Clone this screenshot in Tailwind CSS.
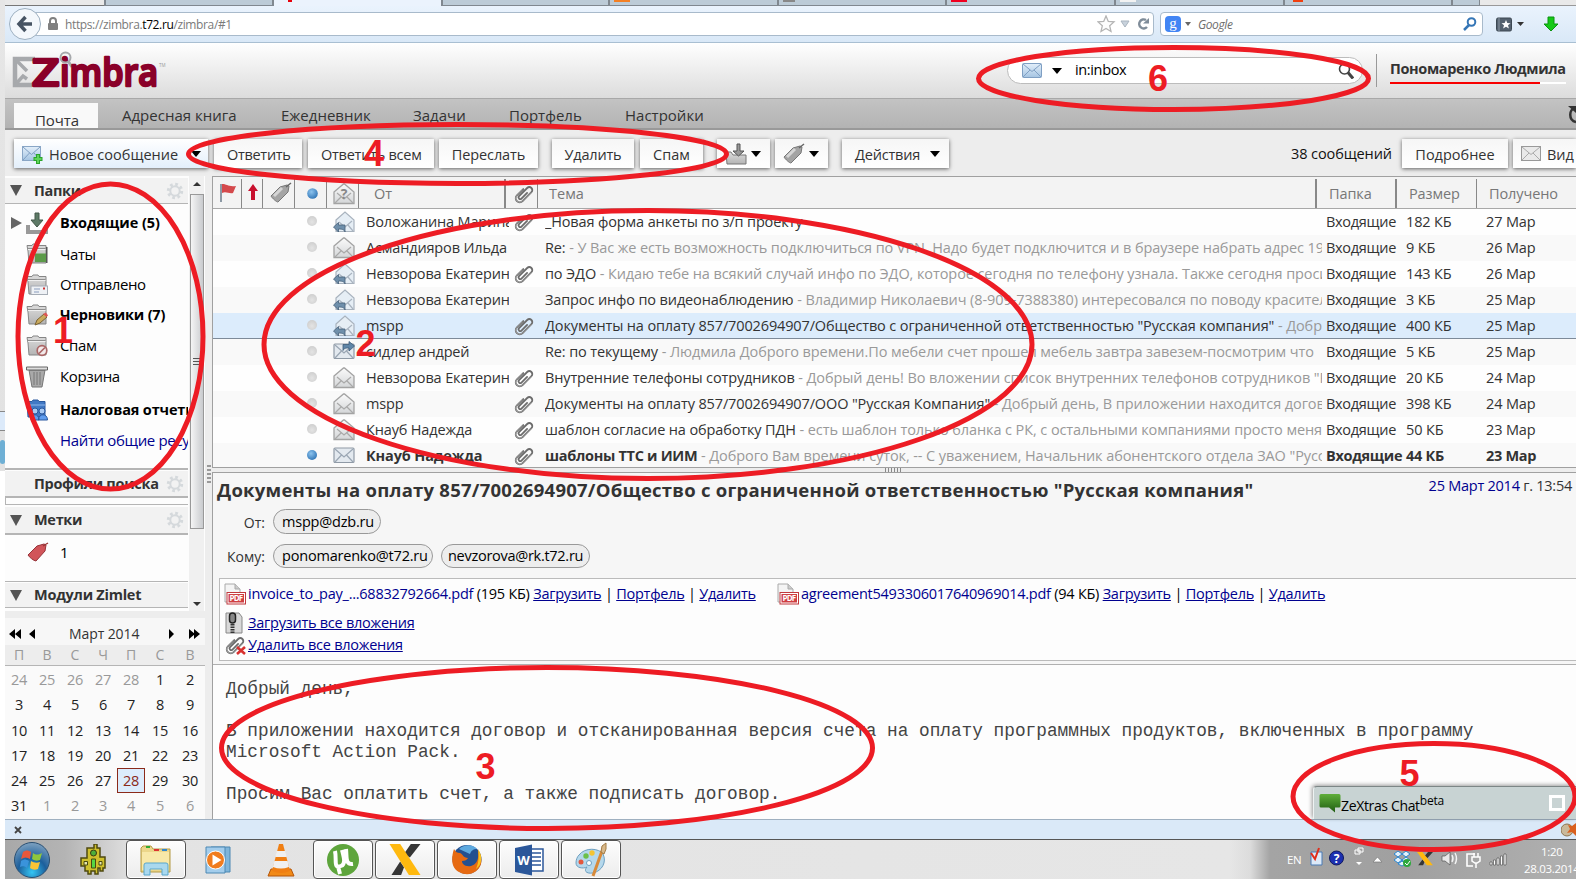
<!DOCTYPE html>
<html lang="ru">
<head>
<meta charset="utf-8">
<title>Zimbra: Входящие</title>
<script src="https://cdn.jsdelivr.net/npm/@tailwindcss/browser@4"></script>
</head>
<body class="relative h-[880px] w-[1576px] overflow-hidden bg-white font-['Open_Sans','Noto_Sans',sans-serif] text-[15px] text-[#333]">

<svg width="0" height="0" class="absolute">
  <defs>
    <linearGradient id="gEnv" x1="0" y1="0" x2="0" y2="1"><stop offset="0" stop-color="#fafafa"/><stop offset="1" stop-color="#d4d6d8"/></linearGradient>
    <linearGradient id="gBlue" x1="0" y1="0" x2="0" y2="1"><stop offset="0" stop-color="#e3effa"/><stop offset="1" stop-color="#a5c4e2"/></linearGradient>
    <linearGradient id="gFold" x1="0" y1="0" x2="0" y2="1"><stop offset="0" stop-color="#dcdcdc"/><stop offset="1" stop-color="#b4b4b4"/></linearGradient>
    <radialGradient id="gDot" cx=".4" cy=".35" r=".7"><stop offset="0" stop-color="#8cc3ee"/><stop offset="1" stop-color="#2f74b5"/></radialGradient>
    <radialGradient id="gOff" cx=".5" cy=".6" r=".6"><stop offset="0" stop-color="#e4e4e4"/><stop offset="1" stop-color="#cfcfcf"/></radialGradient>
    <linearGradient id="gChat" x1="0" y1="0" x2="0" y2="1"><stop offset="0" stop-color="#5fae3a"/><stop offset="1" stop-color="#1f5c12"/></linearGradient>
    <radialGradient id="gOrb" cx=".5" cy=".85" r=".9"><stop offset="0" stop-color="#35c6f4"/><stop offset=".45" stop-color="#1c5f9c"/><stop offset="1" stop-color="#8aa9c4"/></radialGradient>
    <symbol id="open" viewBox="0 0 22 22"><path d="M1 9 10.500 1h1L21 9v11.500H1z" fill="url(#gEnv)" stroke="#a3a3a3" stroke-width="1.300"/><path d="m4 10 7 6 7-6M2 20l6-6M20 20l-6-6" fill="none" stroke="#a9a9a9" stroke-width="1.200"/></symbol>
    <symbol id="closed" viewBox="0 0 22 22"><rect x="1" y="3" width="20" height="14.500" rx="1" fill="#e3e9ef" stroke="#8f9aa6" stroke-width="1.200"/><path d="m2 4 9 8 9-8M2 17l6.500-7M20 17l-6.500-7" fill="none" stroke="#9aa6b3" stroke-width="1.200"/></symbol>
    <symbol id="reply" viewBox="0 0 22 22"><path d="M3 9 12 1l9 8v11.500H3z" fill="#e6eef5" stroke="#a9b3be" stroke-width="1.200"/><path d="m6 11 6 5 7-6M20 20l-5-6" fill="none" stroke="#aab4c0" stroke-width="1.200"/><path d="M.5 16 5.500 11.500V14H12v7c-.5-2-2-3-6.500-3v3z" fill="#6f8fab" stroke="#46617a" stroke-width=".8"/></symbol>
    <symbol id="forward" viewBox="0 0 22 22"><use href="#closed"/><path d="M21.500 5 16 .5v3h-6v6c1-2 2-2.500 6-2.500v3z" fill="#5f86a8" stroke="#3d5c78" stroke-width=".8"/></symbol>
    <symbol id="clip" viewBox="0 0 22 22"><g transform="rotate(45 11 11)" fill="none" stroke-linecap="round"><path d="M7 8v9a4 4 0 0 0 8 0V4.500a3 3 0 0 0-6 0V16a1.700 1.700 0 0 0 3.400 0V8" stroke="#6c6c6c" stroke-width="1.800"/><path d="M7 9v8a4 4 0 0 0 8 0V5" stroke="#b5b5b5" stroke-width=".6"/></g></symbol>
    <symbol id="tag" viewBox="0 0 22 22"><path d="m1 14 9-9 7-2 2 1-1 6-10 10c-1 .5-6-4-7-6z" fill="#a4a4a4" stroke="#777"/><path d="m4 14 8-8" stroke="#d5d5d5" stroke-width="3"/><path d="m16 5 5-4" stroke="#666" stroke-width="1.400"/></symbol>
    <symbol id="gear" viewBox="0 0 18 18"><circle cx="9" cy="9" r="6.700" fill="none" stroke="#d5d9dc" stroke-width="3" stroke-dasharray="2.700 2.560"/><circle cx="9" cy="9" r="4.700" fill="none" stroke="#d5d9dc" stroke-width="2"/></symbol>
    <symbol id="folder" viewBox="0 0 22 22"><path d="M1 2.500h5L7 1h5l1 1.500h7V20H3L2 8z" fill="url(#gFold)" stroke="#858585"/><path d="M1.500 5.500h18" stroke="#8f8f8f"/><path d="M2 6.500h17.500" stroke="#efefef"/></symbol>
    <symbol id="xlogo" viewBox="0 0 32 32"><path d="M22 0h10L21 14l-6-4zM2 32h10l3-8-4-6z" fill="#363636"/><path d="M0 0h11l21 32H20z" fill="#ffb90f"/></symbol>
    <symbol id="pdf" viewBox="0 0 22 22"><path d="M1 1h10l5 5v13H1z" fill="#f4f4f4" stroke="#aaa"/><path d="M11 1v5h5" fill="#ccc" stroke="#aaa"/><rect x="3" y="9.500" width="18.500" height="11.500" fill="#fff" stroke="#c0383c"/><rect x="4.500" y="11" width="15.500" height="8.500" fill="#cf3f43"/><text x="12.200" y="18.200" font-size="8" font-weight="700" fill="#fff" text-anchor="middle" textLength="13.500">PDF</text></symbol>
  </defs>
</svg>

<div class="flex h-[880px] w-[1576px]">
  <!-- desktop strip left of the window -->
  <div class="flex h-full w-[5px] shrink-0 flex-col bg-gradient-to-b from-[#e6e6e6] to-[#dedede]">
    <div class="h-[411px]"></div>
    <div class="h-5 border-y border-[#888] bg-[#dceafa]"></div>
    <div class="h-[9px]"></div>
    <div class="h-6 rounded bg-[#6fb0d5]"></div>
    <div class="h-[7px]"></div>
    <div class="grow bg-white"></div>
  </div>

  <div class="flex w-[1571px] flex-col">
    <!-- browser tab strip -->
    <div class="flex h-1.5 overflow-hidden bg-[#e9e9e9]">
      <div class="w-[99px] border-b border-[#777]"></div>
      <div class="w-[170px] border-x-2 border-b border-[#808890] bg-[#bccbd7]"></div>
      <div class="w-[167px] bg-[#ebf3fd] pl-[14px]"><div class="h-0.5 w-1 bg-red-600"></div></div>
      <div class="w-[169px] border-x-2 border-b border-[#808890] bg-[#bccbd7]"></div>
      <div class="w-[169px] border-r-2 border-b border-[#808890] bg-[#bccbd7] pl-1"><div class="h-0.5 w-4 bg-[#f48024]"></div></div>
      <div class="w-[168px] border-r-2 border-b border-[#808890] bg-[#bccbd7] pl-1"><div class="h-0.5 w-3 bg-[#888]"></div></div>
      <div class="w-[169px] border-r-2 border-b border-[#808890] bg-[#bccbd7] pl-1"><div class="h-0.5 w-4 bg-[#f00020]"></div></div>
      <div class="w-[169px] border-r-2 border-b border-[#808890] bg-[#bccbd7] pl-1"><div class="h-0.5 w-4 bg-[#f2f2f2]"></div></div>
      <div class="w-[168px] border-r-2 border-b border-[#808890] bg-[#bccbd7] pl-2"><div class="h-0.5 w-2.5 bg-[#f04010]"></div></div>
      <div class="w-[27px] border-r border-b border-[#808890] bg-[#bccbd7]"></div>
      <div class="grow border-b border-[#999]"></div>
    </div>

    <!-- address bar -->
    <div class="flex h-[37px] items-center border-b border-[#a9bfd2] bg-gradient-to-b from-[#eaf3fd] to-[#d9e8f7]">
      <div class="z-10 ml-1 flex size-8 items-center justify-center rounded-full border border-[#9db0c1] bg-[#f4f8fc]">
        <svg width="18" height="18" viewBox="0 0 18 18" fill="none" stroke="#475463" stroke-width="3.500"><path d="M9.500 2 3 9l6.500 7M3 9h13"/></svg>
      </div>
      <div class="-ml-1.5 flex h-6 w-[1119px] items-center rounded-r-sm border border-[#a8bacb] bg-white pl-[11px] text-[13px]">
        <svg width="12" height="14" viewBox="0 0 12 14"><path d="M3 7V4c0-4 6-4 6 0v3" fill="none" stroke="#808080" stroke-width="2"/><rect x="1" y="6" width="10" height="7" rx="1" fill="#808080"/></svg>
        <div class="ml-1.5 w-[1010px] pt-0.5 text-[12px] tracking-[-.37px] whitespace-nowrap text-[#7a7a7a]">https://zimbra.<span class="text-black">t72.ru</span>/zimbra/#1</div>
        <svg class="ml-[22px]" width="54" height="18" viewBox="0 0 54 18"><path d="m9 1 2.300 5.500 5.700.4-4.300 3.900 1.300 5.700-5-3-5 3 1.300-5.700L1 6.900l5.700-.4z" fill="#fdfdfd" stroke="#b4b4b4" stroke-width="1.300"/><path d="M24 6h8l-4 6z" fill="#c8d2dc" stroke="#a9b4bf"/><path d="M49 5a4.500 4.500 0 1 0 1 7" fill="none" stroke="#7f8c99" stroke-width="2.500"/><path d="M46 8.500h6V3z" fill="#7f8c99"/></svg>
      </div>
      <div class="ml-1.5 flex h-6 w-[323px] items-center rounded-sm border border-[#a8bacb] bg-white pl-1">
        <div class="flex size-4 items-center justify-center rounded-sm bg-[#4285f4] pb-0.5 font-['Liberation_Serif',serif] text-[15px] text-white">g</div>
        <div class="ml-1 h-0 w-0 border-x-[3px] border-t-[4px] border-x-transparent border-t-[#666]"></div>
        <div class="ml-[7px] w-[265px] pt-0.5 text-[12px] tracking-[-.4px] text-[#6e6e6e] italic">Google</div>
        <svg width="14" height="14" viewBox="0 0 14 14" fill="none" stroke="#3576b6"><circle cx="8.500" cy="5" r="3.800" stroke-width="2"/><path d="m6 8-5 5" stroke-width="2.500"/></svg>
      </div>
      <svg class="ml-[13px]" width="64" height="20" viewBox="0 0 64 20"><rect x=".5" y="4" width="15" height="13" rx="1.500" fill="#54616f" stroke="#3d4853"/><path d="M3 4v13" stroke="#8c98a4"/><path d="m10 6 1.300 3 3.200.3-2.500 2 .9 3.200-2.900-1.700-2.900 1.700.9-3.200-2.500-2L8.700 9z" fill="#fff"/><path d="M21 8h7l-3.500 4z" fill="#333"/><path d="M52 3h6v7h4l-7 7-7-7h4z" fill="#17c917" stroke="#0b9410"/></svg>
    </div>

    <!-- Zimbra masthead -->
    <div class="flex h-[55px] items-center bg-gradient-to-b from-white to-[#dcdcdc]">
      <svg class="ml-[7px]" width="154" height="45" viewBox="0 0 154 45" font-family="Open Sans">
        <path d="M23 11H3v26h17" fill="none" stroke="#a7a9ac" stroke-width="4.500"/><path d="m3 11 12 12M3 37l8-9 4 3" fill="none" stroke="#a7a9ac" stroke-width="3.500"/><path d="m56 13 4 6" stroke="#a7a9ac" stroke-width="3"/>
        <g font-weight="600" font-size="38" fill="#8a0029" stroke="#8a0029" stroke-width="2.400" stroke-linejoin="round"><text x="20" y="38" textLength="27.500" lengthAdjust="spacingAndGlyphs">Z</text><text x="48" y="38" textLength="98" lengthAdjust="spacingAndGlyphs">imbra</text></g>
        <circle cx="53.500" cy="9.500" r="5" fill="none" stroke="#a7a9ac" stroke-width="2"/>
        <text x="147" y="19" font-size="4.500" fill="#999">TM</text>
      </svg>
      <div class="ml-[841px] flex h-[27px] w-[356px] items-center rounded-full border border-[#bcbcbc] bg-white pl-[14px]">
        <svg width="20" height="15" viewBox="0 0 20 15"><rect x=".5" y=".5" width="19" height="14" rx="1" fill="url(#gBlue)" stroke="#7f9fc3"/><path d="m1 1 9 7.500L19 1M1 14l7-7M19 14l-7-7" fill="none" stroke="#7f9fc3"/></svg>
        <div class="ml-[10px] h-0 w-0 border-x-[5px] border-t-[6px] border-x-transparent border-t-black"></div>
        <div class="ml-[13px] w-[263px] pb-px text-[14.500px] tracking-[-.35px] text-black">in:inbox</div>
        <svg width="16" height="16" viewBox="0 0 16 16" fill="none" stroke="#444"><circle cx="6.500" cy="6" r="5" stroke-width="1.600"/><path d="m10 9.500 5 6" stroke-width="3"/></svg>
      </div>
      <div class="ml-[13px] h-[33px] w-px bg-[#999]"></div>
      <div class="ml-[13px] w-[176px]">
        <div class="h-6 text-[14.500px] leading-6 font-bold tracking-[-.35px] whitespace-nowrap text-[#333]">Пономаренко Людмила</div>
        <div class="mt-px h-0.5 w-full bg-white"><div class="h-0.5 w-[150px] bg-[#f80000]"></div></div>
      </div>
    </div>

    <!-- application tabs -->
    <div class="flex h-8 overflow-hidden border-t border-b-2 border-t-[#a8a8a8] border-b-[#999] bg-gradient-to-b from-[#c3c3c3] to-[#b3b3b3] text-[15px] whitespace-nowrap text-[#333]">
      <div class="mt-1 ml-[9px] -mb-0.5 h-7 w-[84px] bg-[#f9f9f9] pt-[6px] pl-[21px] text-[15px] tracking-[-.1px]">Почта</div>
      <div class="ml-6 w-[159px] pt-[5px]">Адресная книга</div>
      <div class="w-[132px] pt-[5px]">Ежедневник</div>
      <div class="w-[96px] pt-[5px]">Задачи</div>
      <div class="w-[116px] pt-[5px]">Портфель</div>
      <div class="w-[942px] pt-[5px]">Настройки</div>
      <svg class="mt-1.5 shrink-0" width="9" height="20" viewBox="0 0 9 20"><path d="M8 3C2 4 1 15 9 17" fill="none" stroke="#333" stroke-width="2.500"/><path d="M1 1h8v7z" fill="#333"/></svg>
    </div>

    <!-- action toolbar -->
    <div class="flex h-[46px] items-center bg-[#ededed] pt-px text-[14.500px] leading-[31px] whitespace-nowrap text-[#333]">
      <div class="ml-[9px] flex h-[29px] w-[194px] items-center bg-gradient-to-b from-white to-[#e3effb] pl-2 shadow-[0_1px_4px_rgba(0,0,0,.6)]">
        <svg width="22" height="20" viewBox="0 0 22 20"><rect x=".5" y="2.500" width="18" height="14" fill="url(#gBlue)" stroke="#89a6c6"/><path d="m1 3 8.500 7.500L18 3M1 16l6.500-7M18 16l-6-7" fill="none" stroke="#7f9fc3"/><path d="M16 10v10M11.500 15h9" stroke="#2aa52a" stroke-width="4"/><path d="M16 11v8M12.500 15h7" stroke="#5fd35a" stroke-width="2"/></svg>
        <div class="ml-[5px] w-[142px] pt-px">Новое сообщение</div>
        <div class="h-0 w-0 border-x-[5px] border-t-[6px] border-x-transparent border-t-black"></div>
      </div>
      <div class="ml-1.5 h-[29px] w-[88px] bg-gradient-to-b from-[#f6f6f6] to-white pl-[13px] tracking-[-.3px] shadow-[0_1px_4px_rgba(0,0,0,.6)]">Ответить</div>
      <div class="ml-1.5 h-[29px] w-[126px] bg-gradient-to-b from-[#f6f6f6] to-white pl-[13px] tracking-[-.25px] shadow-[0_1px_4px_rgba(0,0,0,.6)]">Ответить всем</div>
      <div class="ml-[5px] h-[29px] w-[99px] bg-gradient-to-b from-[#f6f6f6] to-white text-center tracking-[-.1px] shadow-[0_1px_4px_rgba(0,0,0,.6)]">Переслать</div>
      <div class="ml-[14px] h-[29px] w-[82px] bg-gradient-to-b from-[#f6f6f6] to-white text-center tracking-[-.2px] shadow-[0_1px_4px_rgba(0,0,0,.6)]">Удалить</div>
      <div class="ml-1.5 h-[29px] w-[63px] bg-gradient-to-b from-[#f6f6f6] to-white text-center shadow-[0_1px_4px_rgba(0,0,0,.6)]">Спам</div>
      <div class="ml-[14px] flex h-[29px] w-[53px] items-center bg-gradient-to-b from-[#f6f6f6] to-white pl-2 shadow-[0_1px_4px_rgba(0,0,0,.6)]">
        <svg width="22" height="22" viewBox="0 0 22 22"><path d="M1 9h5l2 3h13v9H2z" fill="url(#gFold)" stroke="#777"/><path d="M12 1h3v7h4l-5.500 5L8 8h4z" fill="#999" stroke="#555"/></svg>
        <div class="ml-[4px] h-0 w-0 border-x-[5px] border-t-[6px] border-x-transparent border-t-black"></div>
      </div>
      <div class="ml-[5px] flex h-[29px] w-[53px] items-center bg-gradient-to-b from-[#f6f6f6] to-white pl-2 shadow-[0_1px_4px_rgba(0,0,0,.6)]">
        <svg width="22" height="22"><use href="#tag"/></svg>
        <div class="ml-[4px] h-0 w-0 border-x-[5px] border-t-[6px] border-x-transparent border-t-black"></div>
      </div>
      <div class="ml-[14px] flex h-[29px] w-[107px] items-center bg-gradient-to-b from-[#f6f6f6] to-white pl-[13px] shadow-[0_1px_4px_rgba(0,0,0,.6)]">
        <div class="w-[75px] pt-px tracking-[-.2px]">Действия</div>
        <div class="h-0 w-0 border-x-[5px] border-t-[6px] border-x-transparent border-t-black"></div>
      </div>
      <div class="ml-[342px] w-[111px] tracking-[-.1px] text-[#111]">38 сообщений</div>
      <div class="h-[29px] w-[106px] bg-gradient-to-b from-[#f6f6f6] to-white text-center shadow-[0_1px_4px_rgba(0,0,0,.6)]">Подробнее</div>
      <div class="ml-[5px] flex h-[29px] grow items-center bg-gradient-to-b from-[#f6f6f6] to-white pl-2 shadow-[0_1px_4px_rgba(0,0,0,.6)]">
        <svg width="20" height="15" viewBox="0 0 20 15"><rect x=".5" y=".5" width="19" height="14" fill="#e9e9e9" stroke="#999"/><path d="m1 1 9 7.500L19 1M1 14l7-7M19 14l-7-7" fill="none" stroke="#aaa"/></svg>
        <div class="ml-[6px] pt-px">Вид</div>
      </div>
    </div>

    <!-- workspace -->
    <div class="flex h-[643px] bg-[#ededed]">
      <!-- sidebar -->
      <div class="flex w-[200px] flex-col">
        <div class="flex h-[435px] bg-[#fdfdfd]">
          <div class="flex w-[183px] flex-col overflow-hidden whitespace-nowrap text-black">
            <div class="mt-0.5 flex h-[26px] items-center border-b border-[#b5b5b5] bg-[#f2f2f2] pl-[5px] text-[14.500px] font-bold text-[#333]">
              <div class="h-0 w-0 border-x-[6px] border-t-[11px] border-x-transparent border-t-[#555]"></div><div class="ml-[12px] w-[132px] tracking-[-.3px]">Папки</div><svg width="18" height="18"><use href="#gear"/></svg>
            </div>
            <div class="flex h-[35px] items-center pt-0.5 pl-[6px]">
              <div class="h-0 w-0 border-y-[6px] border-l-[11px] border-y-transparent border-l-[#666]"></div>
              <svg class="ml-1" width="22" height="22" viewBox="0 0 22 22"><path d="M2 13v7h18v-7" fill="none" stroke="#999" stroke-width="4"/><path d="M9 1h4v7h4l-6 7-6-7h4z" fill="#5d7a66" stroke="#44584a"/></svg>
              <b class="ml-[12px] text-[14.500px] tracking-[-.05px]">Входящие (5)</b>
            </div>
            <div class="flex h-[30px] items-center pl-[21px]"><svg width="22" height="22" viewBox="0 0 22 22"><use href="#folder"/><path d="M20 4h1.500v16H20z" fill="#555"/><rect x="9" y="10.500" width="11" height="8.500" fill="#5b9a49"/></svg><div class="ml-[12px] tracking-[-.4px]">Чаты</div></div>
            <div class="flex h-[31px] items-center pl-[21px]"><svg width="22" height="22" viewBox="0 0 22 22"><use href="#folder"/><rect x="5" y="12" width="16.500" height="8.500" fill="#eef1f5" stroke="#a5acb5"/><path d="M8 15h6M8 18h5" stroke="#8b9dbd"/><rect x="17" y="13.500" width="2" height="2" fill="#c33"/></svg><div class="ml-[12px] tracking-[-.4px]">Отправлено</div></div>
            <div class="flex h-[30px] items-center pl-[21px]"><svg width="22" height="22" viewBox="0 0 22 22"><use href="#folder"/><path d="m9 21 2-5 7-6 3 3-7 6z" fill="#c9aa5d" stroke="#7a6230"/><path d="m17 10 3-1.500 2 3-1.500 1.500z" fill="#d55"/></svg><b class="ml-[12px] text-[14.500px] tracking-[-.2px]">Черновики (7)</b></div>
            <div class="flex h-[31px] items-center pl-[21px]"><svg width="22" height="22" viewBox="0 0 22 22"><use href="#folder"/><circle cx="16" cy="15.500" r="4.800" fill="#f2eaea" stroke="#a66" stroke-width="1.700"/><path d="m13 18.500 6-6" stroke="#a66" stroke-width="1.700"/></svg><div class="ml-[12px] tracking-[-.4px]">Спам</div></div>
            <div class="flex h-[31px] items-center pl-[21px]"><svg width="22" height="22" viewBox="0 0 22 22"><path d="M3 4h16l-3 17H6z" fill="#a9a9a9" stroke="#777"/><path d="M8 6v13M11 6v13M14 6v13" stroke="#777"/><path d="M.5 1h21v3H.5z" fill="#ddd" stroke="#666"/></svg><div class="ml-[12px] tracking-[-.3px]">Корзина</div></div>
            <div class="flex h-[35px] items-center pl-[21px]"><svg class="shrink-0" width="22" height="22" viewBox="0 0 22 22"><path d="M1 2.500h5L7 1h5l1 1.500h6V18H2z" fill="#4179c5" stroke="#2a599f"/><path d="M2 6h17" stroke="#8fb8ec"/><circle cx="9" cy="12" r="3" fill="#a9cbf5" stroke="#2a599f"/><circle cx="16" cy="12" r="3" fill="#a9cbf5" stroke="#2a599f"/><path d="M5 21c0-7 8-7 8 0zM12.500 21c0-7 9-7 9 0z" fill="#5f9df0" stroke="#2a599f"/></svg><b class="ml-[12px] text-[14.500px] tracking-[-.15px]">Налоговая отчетность</b></div>
            <div class="flex h-[43px] border-b-2 border-[#b5b5b5] pt-[2px] pl-[55px] tracking-[-.35px] text-[#00008f]">Найти общие ресурсы</div>
            <div class="mt-px flex h-[27px] items-center border-b-2 border-[#b5b5b5] bg-[#f2f2f2] pl-[29px] text-[14.500px] font-bold text-[#333]">
              <div class="w-[132px] tracking-[-.3px]">Профили поиска</div><svg width="18" height="18"><use href="#gear"/></svg>
            </div>
            <div class="h-[7px] shrink-0 border-b border-l border-[#b5b5b5]"></div>
            <div class="mt-0.5 flex h-[28px] shrink-0 items-center border-b-2 border-[#b5b5b5] bg-[#f2f2f2] pl-[5px] text-[14.500px] font-bold text-[#333]">
              <div class="h-0 w-0 border-x-[6px] border-t-[11px] border-x-transparent border-t-[#555]"></div><div class="ml-[12px] w-[132px] tracking-[-.3px]">Метки</div><svg width="18" height="18"><use href="#gear"/></svg>
            </div>
            <div class="flex h-[47px] shrink-0 border-b border-[#b5b5b5] pt-[7px] pl-[22px]">
              <svg width="22" height="22" viewBox="0 0 22 22"><path d="m1 13 9-9 7-2 2 1-1 6-9 10c-2 0-7-4-8-6z" fill="#d1555a" stroke="#96343a"/><path d="m16 4 5-3" stroke="#933" stroke-width="1.300"/></svg><div class="ml-[11px] -mt-px">1</div>
            </div>
            <div class="mt-px flex h-[25px] shrink-0 items-center border-b border-[#b5b5b5] bg-[#f2f2f2] pl-[5px] text-[14.500px] font-bold text-[#333]">
              <div class="h-0 w-0 border-x-[6px] border-t-[11px] border-x-transparent border-t-[#555]"></div><div class="ml-[12px] tracking-[-.25px]">Модули Zimlet</div>
            </div>
          </div>
          <!-- scrollbar -->
          <div class="ml-px flex w-[15px] flex-col items-center bg-[#f0f0f0]">
            <div class="mt-[6px] h-0 w-0 border-x-[4px] border-b-[4px] border-x-transparent border-b-[#333]"></div>
            <div class="mt-2 flex h-[335px] w-[14px] flex-col items-center justify-center gap-0.5 border border-[#999] bg-gradient-to-r from-[#f5f5f5] to-[#c9cbce]">
              <div class="h-px w-2 bg-[#555]"></div><div class="h-px w-2 bg-[#555]"></div><div class="h-px w-2 bg-[#555]"></div>
            </div>
            <div class="mt-[73px] h-0 w-0 border-x-[4px] border-t-[4px] border-x-transparent border-t-[#333]"></div>
          </div>
        </div>
        <!-- mini calendar -->
        <div class="mt-[7px] flex h-[27px] items-center bg-[#f7f7f7] pt-1 text-[14px]">
          <svg class="ml-[4px]" width="30" height="10" viewBox="0 0 30 10"><path d="M6 0v10L0 5zM12 0v10L6 5zM26 0v10l-6-5z" fill="#000"/></svg>
          <div class="ml-[30px] w-[99px] tracking-[-.1px]">Март 2014</div>
          <svg width="32" height="10" viewBox="0 0 32 10"><path d="M1 0v10l5-5zM21 0v10l6-5zM26 0v10l6-5z" fill="#000"/></svg>
        </div>
        <div class="grid h-[21px] grid-cols-[28px_28px_28px_28px_28px_30px_30px] border-b border-[#b5b5b5] bg-[#ededed] text-center text-[14px] leading-[20px] text-[#999]"><i class="not-italic">П</i><i class="not-italic">В</i><i class="not-italic">С</i><i class="not-italic">Ч</i><i class="not-italic">П</i><i class="not-italic">С</i><i class="not-italic">В</i></div>
        <div id="cal" class="grid grow grid-cols-[28px_28px_28px_28px_28px_30px_30px] grid-rows-[repeat(6,25.300px)] bg-[#fafafa] pt-[1px] text-center text-[14.500px] leading-[25px] tracking-[-.4px]"></div>
      </div>

      <!-- splitter -->
      <div class="flex w-[7px] flex-col items-center gap-[2px] pt-[289px]"><i class="h-0.5 w-1 bg-[#999]"></i><i class="h-0.5 w-1 bg-[#999]"></i><i class="h-0.5 w-1 bg-[#999]"></i><i class="h-0.5 w-1 bg-[#999]"></i><i class="h-0.5 w-1 bg-[#999]"></i></div>

      <!-- list and reading pane -->
      <div class="flex w-[1364px] flex-col">
        <div class="h-[292px] shrink-0 overflow-hidden border border-r-0 border-[#a0a0a0] bg-[#fdfdfd]">
          <div class="flex h-8 border-b border-[#a8a8a8] bg-[#f3f3f3] pt-0.5 text-[14.500px] leading-[30px] text-[#777]">
            <div class="w-[29px] border-r border-[#888] pt-[3px] pl-[6px]"><svg width="18" height="21" viewBox="0 0 18 21"><path d="M2 2v18" stroke="#8d99a5" stroke-width="2"/><path d="M3 2c5 0 6 3 14 2l-3 7c-4 1-7-2-11 0z" fill="#d4494c"/></svg></div>
            <div class="w-[21px] border-r border-[#888] pt-[5px] pl-[6px]"><svg width="10" height="16" viewBox="0 0 10 16"><path d="M3 16V7H0l5-7 5 7H7v9z" fill="#c8102e"/></svg></div>
            <div class="w-8 border-r border-[#888] pt-[3px] pl-[7px]"><svg width="22" height="22"><use href="#tag"/></svg></div>
            <div class="w-8 border-r border-[#888] pt-[9px] pl-[12px]"><svg width="11" height="11"><circle cx="5.500" cy="5.500" r="5.300" fill="url(#gDot)"/></svg></div>
            <div class="w-8 border-r border-[#888] pt-[4px] pl-[6px]"><svg width="22" height="22" viewBox="0 0 22 22"><use href="#open"/><text x="11" y="16" font-size="14" font-weight="700" fill="#888" text-anchor="middle">?</text></svg></div>
            <div class="w-[147px] border-r-2 border-[#888] pl-[15px]">От</div>
            <div class="w-8 border-r border-[#888] pt-[4px] pl-[7px]"><svg width="22" height="22"><use href="#clip"/></svg></div>
            <div class="w-[779px] border-r-2 border-[#888] pl-[11px]">Тема</div>
            <div class="w-20 border-r-2 border-[#888] pl-[12px] tracking-[-.1px]">Папка</div>
            <div class="w-[80px] border-r border-[#888] pl-[12px] tracking-[-.1px]">Размер</div>
            <div class="pl-[12px] tracking-[-.1px]">Получено</div>
          </div>
          <div id="rows"></div>
        </div>
        <div class="flex h-1 justify-center gap-[2px] pr-0.5"><i class="h-1 w-px bg-[#888]"></i><i class="h-1 w-px bg-[#888]"></i><i class="h-1 w-px bg-[#888]"></i><i class="h-1 w-px bg-[#888]"></i><i class="h-1 w-px bg-[#888]"></i><i class="h-1 w-px bg-[#888]"></i></div>
        <div class="flex h-[347px] flex-col border border-r-0 border-b-0 border-[#a0a0a0] bg-[#f6f6f6]">
          <div class="flex h-[32px] justify-between pr-1 pl-1 whitespace-nowrap">
            <div class="text-[18.500px] leading-[34px] font-bold tracking-[.24px]">Документы на оплату 857/7002694907/Общество с ограниченной ответственностью "Русская компания"</div>
            <div class="text-[14.500px] leading-[25px] tracking-[-.25px]"><span class="text-[#00008f]">25 Март 2014</span> г. 13:54</div>
          </div>
          <div class="mt-[3px] flex h-[26px] items-center text-[14.500px]"><div class="w-[52px] pt-0.5 text-right text-[14px]">От:</div><div class="ml-[8px] w-[108px] rounded-full border border-[#999] bg-[#ededed] px-2 leading-[23px] tracking-[-.2px] text-black">mspp@dzb.ru</div></div>
          <div class="mt-[9px] flex h-[26px] items-center text-[14.500px] text-black"><div class="w-[52px] text-right text-[14px] text-[#333]">Кому:</div><div class="ml-[8px] w-40 rounded-full border border-[#999] bg-[#ededed] pl-2 leading-[22px] tracking-[-.2px] whitespace-nowrap">ponomarenko@t72.ru</div><div class="ml-2 w-[149px] rounded-full border border-[#999] bg-[#ededed] pl-1.5 leading-[22px] tracking-[-.28px] whitespace-nowrap">nevzorova@rk.t72.ru</div></div>
          <div class="mt-[9px] ml-1.5 h-[83px] shrink-0 border border-r-0 border-[#bbb] bg-[#fdfdfd] pt-[3px] pl-1 text-[14.500px] tracking-[-.25px] whitespace-nowrap text-black">
            <div class="flex h-[24px] items-center">
              <svg class="shrink-0" width="22" height="22"><use href="#pdf"/></svg><div class="ml-0.5 w-[529px]"><span class="text-[#00008f]">invoice_to_pay_...68832792664.pdf</span> (195 КБ) <u class="text-[#00008f]">Загрузить</u> | <u class="text-[#00008f]">Портфель</u> | <u class="text-[#00008f]">Удалить</u></div>
              <svg class="shrink-0" width="22" height="22"><use href="#pdf"/></svg><div class="ml-0.5"><span class="text-[#00008f]">agreement5493306017640969014.pdf</span> (94 КБ) <u class="text-[#00008f]">Загрузить</u> | <u class="text-[#00008f]">Портфель</u> | <u class="text-[#00008f]">Удалить</u></div>
            </div>
            <div class="mt-[6px] flex h-[22px] items-center"><svg width="22" height="22" viewBox="0 0 22 22"><path d="M2 1h13l3 4v16H2z" fill="#d8d8d8" stroke="#888"/><rect x="5.500" y="1" width="6" height="10" rx="3" fill="#888" stroke="#222" stroke-width="1.500"/><path d="M8.500 12v9" stroke="#333" stroke-width="4" stroke-dasharray="1.500 1"/></svg><u class="ml-0.5 text-[#00008f]">Загрузить все вложения</u></div>
            <div class="flex h-[21px] items-center"><svg width="22" height="22" viewBox="0 0 22 22"><use href="#clip"/><path d="m13 13 8 7m0-7-8 7" stroke="#d8312f" stroke-width="2.600"/></svg><u class="ml-0.5 text-[#00008f]">Удалить все вложения</u></div>
          </div>
          <div class="mt-[3px] grow border-t border-[#b0b0b0] bg-[#fdfdfd] pt-[14px] pl-[13px] font-['Liberation_Mono',monospace] text-[17.780px] leading-[21px] whitespace-pre text-[#444]">Добрый день,

В приложении находится договор и отсканированная версия счета на оплату программных продуктов, включенных в программу
Microsoft Action Pack.

Просим Вас оплатить счет, а также подписать договор.</div>
        </div>
      </div>
    </div>

    <!-- add-on bar -->
    <div class="flex h-[21px] items-center justify-between border-t border-b border-t-[#9fb0c0] border-b-[#555] bg-[#dae9f8] pl-[9px]">
      <svg width="8" height="8" viewBox="0 0 8 8"><path d="m1 1 6 6m0-6-6 6" stroke="#444" stroke-width="1.800"/></svg>
      <svg width="15" height="16" viewBox="0 0 15 16"><circle cx="6" cy="8" r="6" fill="#c9b99a" stroke="#8d7450"/><path d="m15 1-4 3-4-1 2 4-3 4 5-1 4 4z" fill="#d9601e"/></svg>
    </div>

    <!-- taskbar -->
    <div class="flex h-[39px] items-center bg-[linear-gradient(90deg,#a8a8a8_0,#b4b4b4_60px,#e3e3e3_130px,#e6e6e6_1225px,#dcdcdc_1245px,#a4a4a4_1265px,#a0a0a0_1400px,#b0b0b0_1571px)]">
      <svg class="ml-2 shrink-0" width="38" height="38" viewBox="0 0 38 38"><circle cx="19" cy="19" r="17.500" fill="url(#gOrb)" stroke="#2a4f72"/><path d="M10 11c3-2 5-2 8 0l-1 7c-3-2-6-2-9 0z" fill="#e9573a"/><path d="M20 12c3 2 5 2 9 0l-2 7c-3 1-5 1-8-1z" fill="#8fc63d"/><path d="M8 20c3-2 5-2 8 0l-2 7c-2-2-5-2-7-1z" fill="#3a93db"/><path d="M18 20c3 2 6 2 9 1l-2 7c-3 1-5 1-8-1z" fill="#fbc436"/></svg>
      <svg class="ml-[29px] shrink-0" width="26" height="32" viewBox="0 0 26 32"><path d="M14 0h3v4h3v9h5v11h-2v3h-3v-3h-2v6h-3v-3h-4v3H8v-3H5v-5H1V14h6V4h7z" fill="#cfc02c" stroke="#4f4a10" stroke-width="1.500"/><circle cx="13.500" cy="9" r="3" fill="#4cae3b" stroke="#3a3a10"/><path d="M11.500 15h4v9h-4z" fill="#56d644" stroke="#4a4a10"/><path d="M4 17.500h3.500V21H4zM19 17.500h3V21h-3z" fill="#e8e8b0" stroke="#4a4a10"/></svg>
      <div class="ml-[20px] flex h-[39px] w-[60px] shrink-0 items-center justify-center rounded-sm border border-[#555] bg-gradient-to-b from-[#fdfdfd] to-[#ececec] shadow-[inset_0_0_0_1px_#fff]"><svg width="34" height="32" viewBox="0 0 34 32"><path d="M2 4 4 2h8l2 3h17v23H2z" fill="#ecd68a" stroke="#b49a45"/><path d="M3 8h27v18H3z" fill="#f8e8a8"/><path d="M7 3h4" stroke="#3a3" stroke-width="2"/><path d="M15 6h5" stroke="#d33" stroke-width="2"/><path d="M23 6h5" stroke="#38c" stroke-width="2"/><path d="M5 31V21q0-2 2-2h20q2 0 2 2v10h-6v-6H11v6z" fill="#a9d8ee" stroke="#5aa7cc"/></svg></div>
      <svg class="ml-[17px] shrink-0" width="30" height="30" viewBox="0 0 30 30"><path d="M8 2h19v25H8z" fill="#7fb5da" stroke="#4c88b3"/><path d="M3 2h19v26H3z" fill="#a3cdec" stroke="#4c88b3"/><circle cx="12.500" cy="15" r="9" fill="#f07c1e" stroke="#fff"/><path d="m9.500 9.500 9 5.500-9 5.500z" fill="#fff"/></svg>
      <svg class="ml-[33px] shrink-0" width="30" height="36" viewBox="0 0 30 36"><path d="M5 27h20l3 7H2z" fill="#f28a17" stroke="#b5560a"/><path d="M13 2h4l7 27q-9 4-18 0z" fill="#f07f13"/><path d="m10.700 9-1.500 6h11.600l-1.500-6zM8.300 19l-1.400 6q8 3 16 0l-1.300-6z" fill="#f0f0f0"/></svg>
      <div class="ml-[17px] flex h-[39px] w-[60px] shrink-0 items-center justify-center rounded-sm border border-[#555] bg-gradient-to-b from-[#fdfdfd] to-[#ececec] shadow-[inset_0_0_0_1px_#fff]"><svg width="34" height="34" viewBox="0 0 34 34"><circle cx="17" cy="17" r="16" fill="#5ea53c"/><path d="M9 8c2 9-2 18 6 15 5-2 3-8 1-16m4-1c1 8-1 16 7 15M12 23l2 8" fill="none" stroke="#fff" stroke-width="4"/></svg></div>
      <div class="ml-0.5 flex h-[39px] w-[60px] shrink-0 items-center justify-center rounded-sm border border-[#555] bg-gradient-to-b from-[#fdfdfd] to-[#ececec] shadow-[inset_0_0_0_1px_#fff]"><svg width="32" height="31"><use href="#xlogo"/></svg></div>
      <div class="ml-0.5 flex h-[39px] w-[60px] shrink-0 items-center justify-center rounded-sm border border-[#555] bg-gradient-to-b from-[#fdfdfd] to-[#ececec] shadow-[inset_0_0_0_1px_#fff]"><svg width="32" height="32" viewBox="0 0 32 32"><circle cx="16" cy="15.500" r="14.500" fill="#24508f"/><path d="M8 5c6-6 15-4 18 0-4 0-6 2-7 5z" fill="#5da9df"/><path d="M3 5c-3 9-3 19 5 23 9 5 19 1 22-8 1-5 0-10-3-13 1 8-1 13-7 15-6 1-9-2-9-5 3 0 5-1 6-3-5 0-5-4-8-5-3 0-4-1-6-4z" fill="#e66a12"/><path d="M27 5c5 7 4 16-2 20 3-7 3-13 2-20z" fill="#fbc31c"/></svg></div>
      <div class="ml-[2px] flex h-[39px] w-[60px] shrink-0 items-center justify-center rounded-sm border border-[#555] bg-gradient-to-b from-[#fdfdfd] to-[#ececec] shadow-[inset_0_0_0_1px_#fff]"><svg width="30" height="32" viewBox="0 0 30 32"><path d="M14 5h15v22H14z" fill="#fff" stroke="#2b579a" stroke-width="1.500"/><path d="M18 9h9M18 13h9M18 17h9M18 21h9" stroke="#2b579a" stroke-width="1.500"/><path d="m1 4 17-3.500v31L1 28z" fill="#2b579a"/><text x="9.500" y="21" font-size="13" font-weight="700" fill="#fff" text-anchor="middle">W</text></svg></div>
      <div class="ml-[2px] flex h-[39px] w-[60px] shrink-0 items-center justify-center rounded-sm border border-[#555] bg-gradient-to-b from-[#fdfdfd] to-[#ececec] shadow-[inset_0_0_0_1px_#fff]"><svg width="32" height="36" viewBox="0 0 32 36"><path d="M4 13C10 5 24 6 28 12c4 8-1 17-10 19-8 1-9-3-6-6-4 2-11 1-11-4 0-3 1-6 3-8z" fill="#b5d8ec" stroke="#6d9fc0"/><circle cx="11" cy="14" r="2.700" fill="#6cc04a"/><circle cx="17" cy="11" r="2.700" fill="#f4c433"/><circle cx="6" cy="20" r="2.500" fill="#e4573d"/><circle cx="14" cy="21" r="2.500" fill="#fff" stroke="#6d9fc0"/><path d="m27 9-9 25" stroke="#d88a3a" stroke-width="3"/><path d="m26 10 1-6 4-3v6l-2 5z" fill="#d9b98a" stroke="#a07a45"/></svg></div>
      <div class="ml-[666px] w-[21px] shrink-0 text-[11.500px] tracking-[-.3px] text-white">EN</div>
      <svg class="shrink-0" width="212" height="36" viewBox="1309 843 212 36">
        <path d="M1312 853h11v13h-11z" fill="#dce9f8" stroke="#4a7ab5"/><path d="m1312 854 4 6 4-11" fill="none" stroke="#e02d1b" stroke-width="2"/>
        <circle cx="1337.500" cy="859" r="7" fill="#1c2fb0" stroke="#10195f"/><text x="1337.500" y="863.500" font-size="12" font-weight="700" fill="#fff" text-anchor="middle">?</text>
        <path d="M1359 849h5v4h-5zM1356 851h5v4h-5z" fill="none" stroke="#fff"/><path d="M1357 863h6l-3 3z" fill="#fff"/>
        <path d="m1374 863 4.500-5 4.500 5z" fill="#fff" stroke="#777" stroke-width=".7"/>
        <path d="m1399 852 4 3-4 3-4-3zM1407 852l4 3-4 3-4-3zM1399 858l4 3-4 3-4-3zM1407 858l4 3-4 3-4-3zM1403 862l4 3-4 2-4-2z" fill="#e4f1fb" stroke="#2c87d0"/><circle cx="1408" cy="864" r="4" fill="#2da83c"/><path d="m1406 864 2 2 3-4" fill="none" stroke="#fff"/>
        <g transform="translate(1418 853) scale(.5 .42)"><use href="#xlogo" width="32" height="32"/></g>
        <path d="M1443 857h3l5-4v13l-5-4h-3z" fill="#e9e9e9" stroke="#555" stroke-width=".7"/><path d="M1453 856q2 3.500 0 7M1456 854q3 5.500 0 11" fill="none" stroke="#f4f4f4" stroke-width="1.400"/>
        <path d="M1476 855h-8v12h6" fill="none" stroke="#fff" stroke-width="1.600"/><path d="M1475 854v4m4-4v4m-6 0h8v4l-3 2h-2l-3-2zm4 6v5" fill="none" stroke="#fff" stroke-width="1.500"/>
        <path d="M1491 866v-3h2v3zM1494.500 866v-5h2v5zM1498 866v-7h2v7zM1501.500 866v-9h2v9zM1505 866v-11h2v11z" fill="#fff" stroke="#444" stroke-width=".6"/>
      </svg>
      <div class="ml-1 w-[50px] text-[11.500px] leading-[17px] tracking-[-.3px] whitespace-nowrap text-white"><div class="pl-[17px]">1:20</div><div>28.03.2014</div></div>
    </div>
    <div class="h-px bg-white"></div>
  </div>
</div>

<!-- chat dock floating over the page -->
<div class="absolute top-[786px] left-[1313px] flex h-[33px] w-[263px] items-center rounded-tl-sm border-t border-l border-t-[#7c8686] border-l-[#eef2f2] bg-[#c8d3d3] pl-[5px] shadow-[-1px_-1px_4px_rgba(0,0,0,.4)]">
  <svg width="22" height="20" viewBox="0 0 22 20"><path d="M2 1h18q1.500 0 1.500 1.500V13q0 1.500-1.500 1.500h-4v5l-6-5H2Q.5 14.500.5 13V2.500Q.5 1 2 1z" fill="url(#gChat)"/></svg>
  <div class="w-[208px] pt-[5px] text-[14px] tracking-[-.35px] whitespace-nowrap text-black">ZeXtras Chat<sup class="text-[12px] tracking-[-.2px]">beta</sup></div>
  <div class="size-4 border-[3px] border-white bg-[#c8d3d3]"></div>
</div>

<!-- red callouts -->
<svg class="pointer-events-none absolute top-0 left-0" width="1576" height="880" viewBox="0 0 1576 880">
  <g fill="none" stroke="#ed1c24" stroke-width="5">
    <ellipse cx="110.500" cy="336.500" rx="92.500" ry="152.500"/>
    <ellipse cx="648" cy="344.500" rx="384" ry="134"/>
    <ellipse cx="547" cy="748" rx="325.500" ry="80.500"/>
    <ellipse cx="457.500" cy="154" rx="269" ry="29.500"/>
    <ellipse cx="1434" cy="796.500" rx="141" ry="53"/>
    <ellipse cx="1173.500" cy="78.500" rx="195" ry="31"/>
  </g>
  <g fill="#ed1c24" font-family="Liberation Sans" font-weight="700" font-size="36">
    <text x="53" y="343">1</text><text x="355.500" y="356">2</text><text x="475.500" y="778.500">3</text><text x="364" y="165.500">4</text><text x="1399.500" y="785.500">5</text><text x="1148" y="90.500">6</text>
  </g>
</svg>

<script>
const mails = [
  ['reply','Воложанина Марина',1,'_Новая форма анкеты по з/п проекту','','182 КБ','27 Мар'],
  ['open','Асмандияров Ильда',0,'Re:','У Вас же есть возможность подключиться по VPN. Надо будет подключится и в браузере набрать адрес 192.168','9 КБ','26 Мар'],
  ['reply','Невзорова Екатерина',1,'по ЭДО','Кидаю тебе на всякий случай инфо по ЭДО, которое сегодня по телефону узнала. Также сегодня просили','143 КБ','26 Мар'],
  ['reply','Невзорова Екатерина',0,'Запрос инфо по видеонаблюдению','Владимир Николаевич (8-909-7388380) интересовался по поводу красителей','3 КБ','25 Мар'],
  ['reply','mspp',1,'Документы на оплату 857/7002694907/Общество с ограниченной ответственностью "Русская компания"','Добрый день','400 КБ','25 Мар'],
  ['forward','сидлер андрей',0,'Re: по текущему','Людмила Доброго времени.По мебели счет прошел мебель завтра завезем-посмотрим что','5 КБ','25 Мар'],
  ['open','Невзорова Екатерина',1,'Внутренние телефоны сотрудников','Добрый день! Во вложении список внутренних телефонов сотрудников "Русская','20 КБ','24 Мар'],
  ['open','mspp',1,'Документы на оплату 857/7002694907/ООО "Русская Компания"','Добрый день, В приложении находится догово','398 КБ','24 Мар'],
  ['open','Кнауб Надежда',1,'шаблон согласие на обработку ПДН','есть шаблон только бланка с РК, с остальными компаниями просто меняем','50 КБ','23 Мар'],
  ['closed','Кнауб Надежда',1,'шаблоны ТТС и ИИМ','Доброго Вам времени суток, -- С уважением, Начальник абонентского отдела ЗАО "Русская','44 КБ','23 Мар']
];
document.getElementById('rows').innerHTML = mails.map((m, i) => {
  const tone = i === 4 ? 'border-b border-[#7d8a99] bg-[#dcecfc]' : i % 2 ? 'bg-[#f9f9f9]' : 'bg-[#fefefe]';
  const weight = i === 9 ? 'font-bold text-[14.500px] tracking-[-.3px]' : 'text-[14.500px] tracking-[-.13px]';
  return `<div class="flex h-[26px] items-center whitespace-nowrap ${tone} ${weight}">
    <svg class="ml-[93px] shrink-0" width="12" height="12"><circle cx="6" cy="5" r="5" fill="url(#${i === 9 ? 'gDot' : 'gOff'})"/></svg>
    <svg class="ml-[15px] shrink-0" width="22" height="22"><use href="#${m[0]}"/></svg>
    <div class="ml-[11px] w-[143px] shrink-0 overflow-hidden tracking-[-.15px]">${m[1]}</div>
    <div class="w-[36px] shrink-0 pl-1">${m[2] ? '<svg width="22" height="22"><use href="#clip"/></svg>' : ''}</div>
    <div class="w-[777px] shrink-0 overflow-hidden">${m[3]}${m[4] ? `<span class="font-normal tracking-[-.09px] text-[#999]"> - ${m[4]}</span>` : ''}</div>
    <div class="ml-1 w-20 shrink-0 tracking-[-.3px]">Входящие</div>
    <div class="w-20 shrink-0">${m[5]}</div>
    <div>${m[6]}</div>
  </div>`;
}).join('');

const days = [24,25,26,27,28,1,2,3,4,5,6,7,8,9,10,11,12,13,14,15,16,17,18,19,20,21,22,23,24,25,26,27,28,29,30,31,1,2,3,4,5,6];
document.getElementById('cal').innerHTML = days.map((d, i) =>
  `<div class="${i === 32 ? 'border border-[#8b2a1a] bg-[#dcecfc] leading-[23px] text-[#8b2a1a]' : i < 5 || i > 35 ? 'text-[#999]' : 'text-[#222]'}">${d}</div>`).join('');
</script>
</body>
</html>
